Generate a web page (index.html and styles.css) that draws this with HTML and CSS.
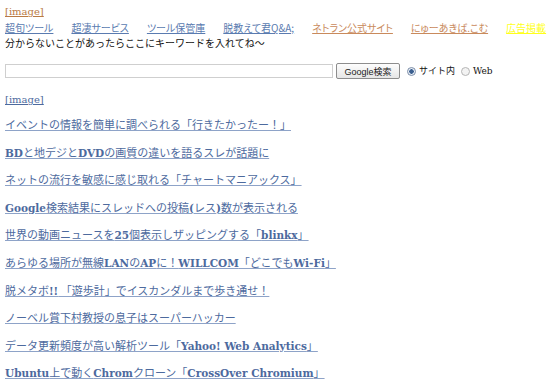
FILE: index.html
```html
<!DOCTYPE html>
<html lang="ja">
  <head>
    <meta charset="UTF-8" />
    <title>超旬ツール</title>
    <link rel="stylesheet" href="styles.css">
  </head>
  <body>
    <!-- HEADER -->
    <div class="header">
      <a class="logo" href="#">[image]</a>
      <ul class="nav">
        <li><a href="#">超旬ツール</a></li>
        <li><a href="#">超凄サービス</a></li>
        <li><a href="#">ツール保管庫</a></li>
        <li><a href="#">脱教えて君Q&amp;A;</a></li>
        <li><a class="ext" href="#">ネトラン公式サイト</a></li>
        <li><a class="ext" href="#">にゅーあきば.こむ</a></li>
        <li><a class="ad" href="#">広告掲載</a></li>
      </ul>
      <p class="lead">分からないことがあったらここにキーワードを入れてね～</p>
    </div>

    <!-- SEARCH -->
    <form class="search">
      <input type="text" class="search-input" />
      <button type="button" class="search-btn">Google検索</button>
      <label class="scope"><span class="radio checked"></span>サイト内</label>
      <label class="scope"><span class="radio"></span><span class="web">Web</span></label>
    </form>

    <a class="banner" href="#">[image]</a>

    <!-- HEADLINES -->
    <ul class="news">
      <li><a href="#">イベントの情報を簡単に調べられる「行きたかったー！」</a></li>
      <li><a href="#"><b>BD</b>と地デジと<b>DVD</b>の画質の違いを語るスレが話題に</a></li>
      <li><a href="#">ネットの流行を敏感に感じ取れる「チャートマニアックス」</a></li>
      <li><a href="#"><b>Google</b>検索結果にスレッドへの投稿<b>(</b>レス<b>)</b>数が表示される</a></li>
      <li><a href="#">世界の動画ニュースを<b>25</b>個表示しザッピングする「<b>blinkx</b>」</a></li>
      <li><a href="#">あらゆる場所が無線<b>LAN</b>の<b>AP</b>に！<b>WILLCOM</b>「どこでも<b>Wi-Fi</b>」</a></li>
      <li><a href="#">脱メタボ<b>!!</b> 「遊歩計」でイスカンダルまで歩き通せ！</a></li>
      <li><a href="#">ノーベル賞下村教授の息子はスーパーハッカー</a></li>
      <li><a href="#">データ更新頻度が高い解析ツール「<b>Yahoo! Web Analytics</b>」</a></li>
      <li><a href="#"><b>Ubuntu</b>上で動く<b>Chrom</b>クローン「<b>CrossOver Chromium</b>」</a></li>
    </ul>
  </body>
</html>
```
FILE: styles.css
```css
/* Global */
body {
  margin: 0;
  padding: 4px 5px;
  background: #fff;
  color: #111;
  font-family: "Noto Sans CJK JP", sans-serif;
  font-size: 10px;
  line-height: 1.4;
}
a {
  color: #4d6a9e;
}

/* HEADER */
.header {
  display: flex;
  flex-direction: column;
  align-items: flex-start;
}
.logo {
  font-family: "DejaVu Serif", serif;
  font-size: 10px;
  color: #b97a45;
  line-height: 16px;
}
.nav {
  list-style: none;
  margin: 0;
  padding: 0;
  display: flex;
  gap: 18px;
  line-height: 16px;
  font-size: 10px;
  white-space: nowrap;
  font-feature-settings: "palt";
}
.nav li {
  flex-shrink: 0;
}
.nav a {
  color: #5a7bb0;
}
.nav a.ext {
  color: #c98a5c;
}
.nav a.ad {
  color: #ffff1a;
}
.lead {
  margin: 0;
  line-height: 14px;
}

/* SEARCH */
.search {
  display: flex;
  align-items: center;
  margin-top: 13px;
  height: 16px;
}
.search-input {
  width: 326px;
  height: 12px;
  margin: 0 3px 0 0;
  padding: 0;
  border: 1px solid #cfcfcf;
}
.search-btn {
  width: 64px;
  height: 16px;
  padding: 0;
  font-family: "Liberation Sans", "Noto Sans CJK JP", sans-serif;
  font-size: 9px;
  color: #222;
  background: linear-gradient(#fdfdfd, #e6e6e6);
  border: 1px solid #8d8d8d;
  border-radius: 2px;
}
.scope {
  display: flex;
  align-items: center;
  font-size: 9px;
  margin-left: 7px;
}
.scope + .scope {
  margin-left: 6px;
}
.radio {
  width: 7px;
  height: 7px;
  border: 1px solid #b5b5b5;
  border-radius: 50%;
  background: #f3f3f3;
  margin-right: 3px;
}
.radio.checked {
  background: radial-gradient(circle, #3b5f8f 0 2px, #e8eef6 2.5px);
  border-color: #7c8ea8;
}
.web {
  font-family: "DejaVu Serif", serif;
}

.banner {
  display: inline-block;
  margin-top: 13px;
  font-family: "DejaVu Serif", serif;
  font-size: 10px;
  line-height: 16px;
}

/* HEADLINES */
.news {
  list-style: none;
  margin: 7px 0 0;
  padding: 0;
}
.news li {
  height: 27.6px;
  line-height: 18px;
  font-size: 11px;
  white-space: nowrap;
}
.news a {
  color: #4d6a9e;
  text-decoration-color: #8ea3c8;
}
.news b {
  font-family: "DejaVu Serif", serif;
  font-size: 10.5px;
}
```
